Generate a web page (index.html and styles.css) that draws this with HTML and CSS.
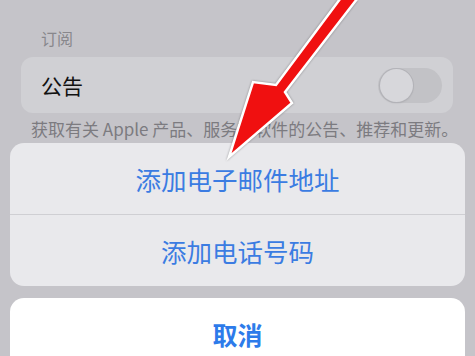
FILE: index.html
```html
<!DOCTYPE html>
<html lang="zh-CN">
<head>
<meta charset="utf-8">
<link rel="stylesheet" href="styles.css">
</head>
<body>
<div class="page">
  <section class="settings">
    <div class="section-title">订阅</div>
    <div class="card">
      <span class="card-label">公告</span>
      <span class="toggle"><span class="knob"></span></span>
    </div>
    <div class="footnote">获取有关 Apple 产品、服务和软件的公告、推荐和更新。</div>
  </section>
  <section class="sheet">
    <div class="sheet-group">
      <div class="sheet-row">添加电子邮件地址</div>
      <div class="sheet-row">添加电话号码</div>
    </div>
    <div class="sheet-cancel">取消</div>
  </section>
  <svg class="arrow" width="475" height="356" viewBox="0 0 475 356">
    <polygon points="346,-9 357,-1 285,92 292,103 229,157 253,82 276,85" fill="#f01010" stroke="#ffffff" stroke-width="2.5" stroke-linejoin="miter"/>
  </svg>
</div>
</body>
</html>
```
FILE: styles.css
```css
html, body {
  margin: 0;
  padding: 0;
}
body {
  width: 475px;
  height: 356px;
  overflow: hidden;
  background: #c5c4c9;
  font-family: "Noto Sans CJK SC", "Noto Sans", sans-serif;
}
.page {
  position: relative;
  width: 475px;
  height: 356px;
  overflow: hidden;
}
.settings {
  padding-top: 28px;
}
.section-title {
  padding-left: 41px;
  font-size: 16px;
  line-height: 20px;
  color: #88878c;
}
.card {
  margin: 9px 22px 0 21px;
  height: 56px;
  background: #d0d0d4;
  border-radius: 12px;
  display: flex;
  align-items: center;
  justify-content: space-between;
  padding: 0 11px 0 20px;
  box-sizing: border-box;
}
.card-label {
  font-size: 21px;
  color: #111111;
  line-height: 24px;
}
.toggle {
  width: 64px;
  height: 35px;
  border-radius: 18px;
  background: #c2c2c6;
  display: flex;
  align-items: center;
  padding-left: 2px;
  box-sizing: border-box;
}
.knob {
  width: 33px;
  height: 33px;
  border-radius: 50%;
  background: #d7d7db;
  box-shadow: 0 0 0 1px #b3b3b8, 0 1px 2px rgba(0,0,0,0.15);
}
.footnote {
  padding-left: 31px;
  margin-top: 6px;
  font-size: 17px;
  line-height: 20px;
  color: #7c7b80;
  white-space: nowrap;
}
.sheet {
  margin: 4px 10px 0 10px;
  display: flex;
  flex-direction: column;
  gap: 12px;
}
.sheet-group {
  background: #e9e9ec;
  border-radius: 14px;
  overflow: hidden;
}
.sheet-row {
  height: 71px;
  display: flex;
  align-items: center;
  justify-content: center;
  font-size: 25.5px;
  color: #3b7ce2;
}
.sheet-row + .sheet-row {
  border-top: 1px solid #cfcfd3;
}
.sheet-cancel {
  height: 72px;
  background: #ffffff;
  border-radius: 14px;
  display: flex;
  align-items: center;
  justify-content: center;
  font-size: 25px;
  font-weight: 700;
  color: #2d7bea;
}
.arrow {
  position: absolute;
  left: 0;
  top: 0;
  filter: drop-shadow(0 0 1px rgba(0,0,0,0.35));
}
```
